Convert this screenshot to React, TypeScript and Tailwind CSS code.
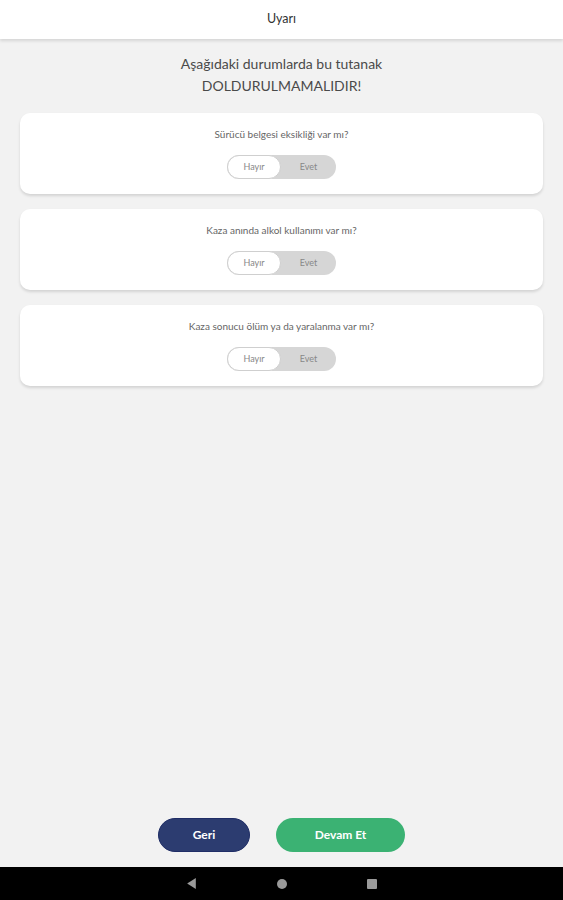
import * as React from 'react';

const questions = [
  'Sürücü belgesi eksikliği var mı?',
  'Kaza anında alkol kullanımı var mı?',
  'Kaza sonucu ölüm ya da yaralanma var mı?',
];

const Toggle = () => (
  <div className="flex h-[24px] w-[109px] items-center rounded-full bg-[#d6d6d6]">
    <div className="flex h-[24px] w-[54px] items-center justify-center rounded-full border border-[#cfcfcf] bg-white text-[9px] text-[#888]">
      Hayır
    </div>
    <div className="flex flex-1 items-center justify-center text-[9px] text-[#888]">Evet</div>
  </div>
);

export default function App() {
  return (
    <div className="flex h-[900px] flex-col bg-[#f2f2f2] font-['Lato',sans-serif]">
      <div className="relative z-10 flex h-[39px] items-center justify-center bg-white text-[12.5px] text-[#333] shadow-[0_2px_3px_rgba(0,0,0,0.12)]">
        Uyarı
      </div>

      <div className="flex flex-1 flex-col px-[20px]">
        <div className="mt-[14px] text-center text-[14px] leading-[22px] text-[#4a4a4a]">
          <div>Aşağıdaki durumlarda bu tutanak</div>
          <div>DOLDURULMAMALIDIR!</div>
        </div>

        <div className="mt-[16px] flex flex-col gap-[15px]">
          {questions.map((q) => (
            <div
              key={q}
              className="flex h-[81px] flex-col items-center rounded-[10px] bg-white pt-[15px] shadow-[0_2px_3px_rgba(0,0,0,0.13)]"
            >
              <div className="text-[10px] leading-[12px] text-[#666]">{q}</div>
              <div className="mt-[15px]">
                <Toggle />
              </div>
            </div>
          ))}
        </div>
      </div>

      <div className="flex justify-center gap-[26px] pb-[15px]">
        <button className="h-[34px] w-[92px] rounded-full border border-[#1f2d66] bg-[#2c3c70] text-[12px] font-bold text-white">
          Geri
        </button>
        <button className="h-[34px] w-[129px] rounded-full bg-[#3bb273] text-[12px] font-bold text-white">
          Devam Et
        </button>
      </div>

      <div className="flex h-[33px] items-center justify-center gap-[78px] bg-black">
        <svg width="13" height="13" viewBox="0 0 12 12">
          <path d="M10 1 L10 11 L2 6 Z" fill="#9a9a9a" />
        </svg>
        <svg width="12" height="12" viewBox="0 0 12 12">
          <circle cx="6" cy="6" r="5" fill="#9a9a9a" />
        </svg>
        <svg width="12" height="12" viewBox="0 0 12 12">
          <rect x="1" y="1" width="10" height="10" rx="1" fill="#9a9a9a" />
        </svg>
      </div>
    </div>
  );
}
